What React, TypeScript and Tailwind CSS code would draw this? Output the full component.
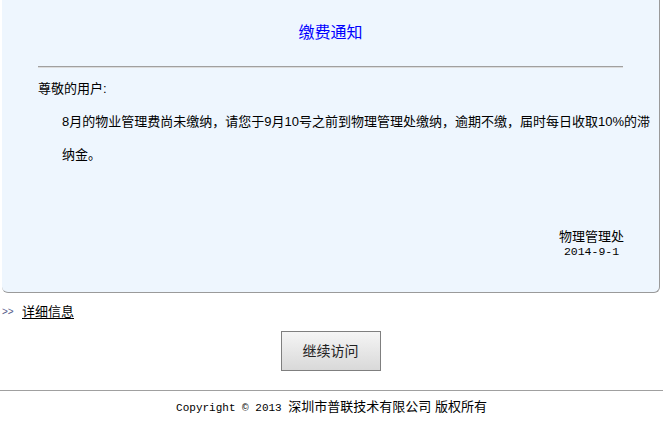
const cjk = "font-['Liberation_Sans','Noto_Sans_CJK_SC',sans-serif]";

function Notice() {
  return (
    <div className="ml-[2px] mr-[3px] rounded-b-[6px] border-r border-b border-[#9a9a9a] bg-[#eef6fe] pb-[34px]">
      <h1 className="pt-[23px] text-center text-[16px] leading-[20px] font-normal text-[#0000ff]">
        缴费通知
      </h1>

      <div className="ml-[36px] mr-[36px] mt-[23px] h-[2px] border-t border-b border-t-[#a0a0a0] border-b-[#dcdcdc]" />

      <div className="ml-[36px] mt-[11px] text-[13px] leading-[20px] text-black">尊敬的用户:</div>

      <p className="ml-[60px] mt-[6px] w-[589px] text-[13px] leading-[33px] text-black">
        8月的物业管理费尚未缴纳，请您于9月10号之前到物理管理处缴纳，逾期不缴，届时每日收取10%的滞纳金。
      </p>

      <div className="mr-[35px] mt-[57px] flex justify-end">
        <div className="flex flex-col items-center text-black">
          <span className="text-[13px] leading-[18px]">物理管理处</span>
          <span className="font-['Liberation_Mono',monospace] text-[11.5px] leading-[12px]">2014-9-1</span>
        </div>
      </div>
    </div>
  );
}

export default function App() {
  return (
    <div className={`h-[425px] w-[663px] bg-white ${cjk}`}>
      <Notice />

      <div className="mt-[9px] flex items-center leading-[20px]">
        <span className="ml-[2px] w-[20px] text-[10px] text-[#555a8a]">&gt;&gt;</span>
        <a href="#" className="text-[13px] text-black underline underline-offset-2">
          详细信息
        </a>
      </div>

      <div className="mt-[9px] flex justify-center">
        <button className="ml-[-2px] h-[40px] w-[100px] border border-[#7f7f7f] bg-gradient-to-b from-[#f5f5f5] to-[#d9d9d9] text-[14px] text-[#222]">
          继续访问
        </button>
      </div>

      <div className="mt-[19px] border-t border-[#a0a0a0]" />

      <div className="mt-[6px] flex items-baseline justify-center leading-[20px] text-black">
        <span className="font-['Liberation_Mono',monospace] text-[11px] whitespace-pre">Copyright © 2013 </span>
        <span className="text-[13px]">深圳市普联技术有限公司 版权所有</span>
      </div>
    </div>
  );
}
